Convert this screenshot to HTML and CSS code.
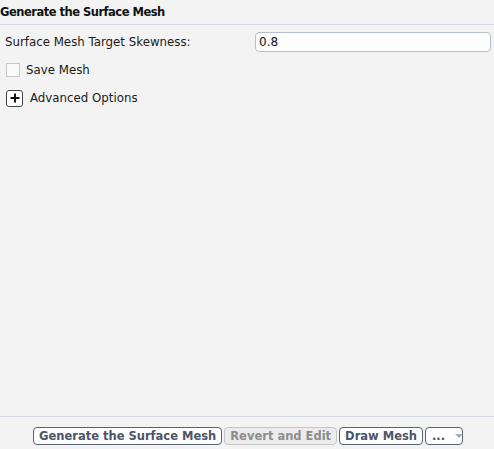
FILE: index.html
```html
<!DOCTYPE html>
<html>
<head>
<meta charset="utf-8">
<link rel="stylesheet" href="styles.css">
</head>
<body>
<div class="panel">
  <div class="title">Generate the Surface Mesh</div>
  <div class="content">
    <div class="row field">
      <label class="label">Surface Mesh Target Skewness:</label>
      <div class="input">0.8</div>
    </div>
    <div class="row check">
      <span class="box"></span>
      <span class="check-label">Save Mesh</span>
    </div>
    <div class="row adv">
      <span class="plus">
        <svg width="10" height="10" viewBox="0 0 10 10"><path d="M5 0.5V9.5M0.5 5H9.5" stroke="#111" stroke-width="2"/></svg>
      </span>
      <span class="adv-label">Advanced Options</span>
    </div>
  </div>
  <div class="footer">
    <button class="btn">Generate the Surface Mesh</button>
    <button class="btn disabled">Revert and Edit</button>
    <button class="btn">Draw Mesh</button>
    <button class="btn more">...<span class="caret"></span></button>
  </div>
</div>
</body>
</html>
```
FILE: styles.css
```css
* { box-sizing: border-box; }
html, body { margin: 0; padding: 0; }
body {
  background: #f3f3f3;
  font-family: "DejaVu Sans", Verdana, sans-serif;
  font-size: 11.8px;
  color: #1a1a1a;
  width: 494px;
  height: 449px;
  overflow: hidden;
}
.panel {
  display: flex;
  flex-direction: column;
  height: 449px;
}
.title {
  font-weight: bold;
  font-size: 11.5px;
  letter-spacing: -0.5px;
  height: 25px;
  padding: 5px 0 0 0;
  border-bottom: 1px solid #d3d7df;
  color: #111;
}
.content {
  flex: 1;
  padding: 6px 3px 0 5px;
}
.row { display: flex; align-items: center; }
.field { height: 21px; justify-content: space-between; }
.label { color: #1a1a1a; }
.input {
  width: 236px;
  height: 20px;
  border: 1px solid #b8bfcc;
  border-radius: 4px;
  background: #fdfdfd;
  padding: 2px 0 0 3px;
  color: #111;
  font-size: 12px;
}
.check { margin-top: 10px; height: 16px; padding-left: 1px; }
.box {
  width: 14px; height: 14px;
  border: 1px solid #c7c7c7;
  background: #fafafa;
  margin-right: 6px;
}
.adv { margin-top: 11px; height: 18px; padding-left: 1px; }
.plus {
  width: 17px; height: 17px;
  border: 1px solid #444;
  border-radius: 3px;
  background: #fff;
  display: flex; align-items: center; justify-content: center;
  margin-right: 7px;
}
.footer {
  height: 33px;
  border-top: 1px solid #d3d7df;
  display: flex;
  justify-content: flex-end;
  align-items: flex-start;
  padding: 10px 31px 0 0;
  gap: 2px;
}
.btn {
  font-family: "DejaVu Sans", Verdana, sans-serif;
  font-size: 11.5px;
  font-weight: bold;
  color: #4b5568;
  background: #fefefe;
  border: 1px solid #596273;
  border-radius: 4px;
  height: 18px;
  padding: 0 5px;
  line-height: 16px;
  margin: 0;
}
.btn.disabled {
  color: #8c8c8c;
  background: #ececec;
  border-color: #c6c6c6;
}
.btn.more {
  width: 38px;
  display: flex; align-items: center;
  padding: 0 0 0 6px;
  gap: 10px;
  color: #4b5568;
}
.caret {
  width: 0; height: 0;
  border-left: 4px solid transparent;
  border-right: 4px solid transparent;
  border-top: 4px solid #a8acb4;
}
```
